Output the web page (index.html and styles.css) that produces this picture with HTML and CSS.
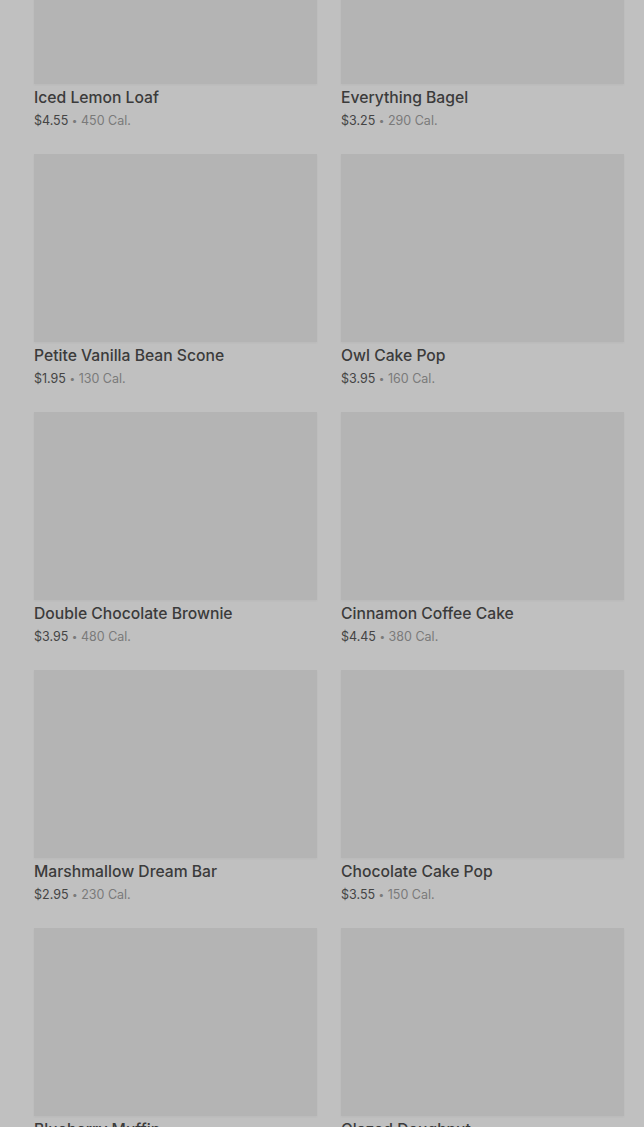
FILE: index.html
```html
<!DOCTYPE html>
<html lang="en">
<head>
    <meta charset="UTF-8">
    <meta name="viewport" content="width=device-width, initial-scale=1.0">
    <title>Bakery Menu</title>
    <link rel="stylesheet" href="styles.css">
</head>
<body>
    <div class="menu-grid">
        <div class="item">
            <div class="item-image"></div>
            <h3>Iced Lemon Loaf</h3>
            <p><span class="price">$4.55</span> <span class="dot">•</span> 450 Cal.</p>
        </div>
        <div class="item">
            <div class="item-image"></div>
            <h3>Everything Bagel</h3>
            <p><span class="price">$3.25</span> <span class="dot">•</span> 290 Cal.</p>
        </div>
        <div class="item">
            <div class="item-image"></div>
            <h3>Petite Vanilla Bean Scone</h3>
            <p><span class="price">$1.95</span> <span class="dot">•</span> 130 Cal.</p>
        </div>
        <div class="item">
            <div class="item-image"></div>
            <h3>Owl Cake Pop</h3>
            <p><span class="price">$3.95</span> <span class="dot">•</span> 160 Cal.</p>
        </div>
        <div class="item">
            <div class="item-image"></div>
            <h3>Double Chocolate Brownie</h3>
            <p><span class="price">$3.95</span> <span class="dot">•</span> 480 Cal.</p>
        </div>
        <div class="item">
            <div class="item-image"></div>
            <h3>Cinnamon Coffee Cake</h3>
            <p><span class="price">$4.45</span> <span class="dot">•</span> 380 Cal.</p>
        </div>
        <div class="item">
            <div class="item-image"></div>
            <h3>Marshmallow Dream Bar</h3>
            <p><span class="price">$2.95</span> <span class="dot">•</span> 230 Cal.</p>
        </div>
        <div class="item">
            <div class="item-image"></div>
            <h3>Chocolate Cake Pop</h3>
            <p><span class="price">$3.55</span> <span class="dot">•</span> 150 Cal.</p>
        </div>
        <div class="item">
            <div class="item-image"></div>
            <h3>Blueberry Muffin</h3>
            <p><span class="price">$3.25</span> <span class="dot">•</span> 360 Cal.</p>
        </div>
        <div class="item">
            <div class="item-image"></div>
            <h3>Glazed Doughnut</h3>
            <p><span class="price">$2.75</span> <span class="dot">•</span> 480 Cal.</p>
        </div>
    </div>
</body>
</html>
```

FILE: styles.css
```css
/* Page, dimmed behind an overlay */
body {
    margin: 0;
    padding: 0;
    background-color: #c0c0c0;
    font-family: Inter, "Noto Sans", sans-serif;
    overflow: hidden;
}

/* Two column menu grid, scrolled down a bit */
.menu-grid {
    display: grid;
    grid-template-columns: 283px 283px;
    column-gap: 24px;
    row-gap: 25px;
    padding: 0 20px 0 34px;
    margin-top: -104px;
}

.item-image {
    height: 188px;
    background-color: #b4b4b4;
    box-shadow: 0 1px 2px rgba(0, 0, 0, 0.04);
}

.item h3 {
    margin: 4px 0 0;
    font-size: 15.7px;
    line-height: 20px;
    font-weight: 500;
    color: #3b3b3b;
}

.item p {
    margin: 5px 0 0;
    height: 16px;
    font-size: 12.5px;
    line-height: 16px;
    color: #7a7a7a;
}

.price {
    color: #444;
}

.dot {
    font-size: 10px;
    line-height: 10px;
    vertical-align: 1px;
}
```
